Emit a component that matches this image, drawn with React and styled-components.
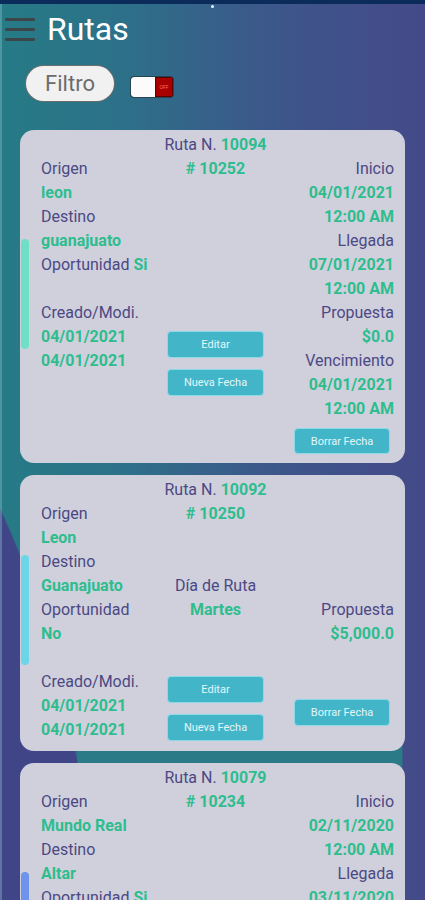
import React from "react";
import styled, { createGlobalStyle } from "styled-components";

const GlobalStyle = createGlobalStyle`
  html, body { margin: 0; padding: 0; background: #3f4586; }
  body { font-family: Roboto, "Liberation Sans", sans-serif; }
  * { box-sizing: border-box; }
`;

const Page = styled.div`
  width: 425px;
  min-height: 1160px;
  overflow: hidden;
  background:
    radial-gradient(399px 749px at -300px 1000px, #3f4586 99.6%, transparent 100%),
    radial-gradient(163px 200px at 240px 757px, #2a7a88 99.4%, transparent 100%),
    linear-gradient(90deg, #267b86 0%, #2d7089 30%, #37608a 50%, #3e548a 70%, #444a89 100%);
  box-shadow: inset 2px 0 0 rgba(150, 205, 210, 0.35);
`;

const TopStrip = styled.div`
  height: 4px;
  background: #0b2c5a;
  display: flex;
  justify-content: center;
  align-items: flex-start;
`;

const StatusDot = styled.span`
  width: 3px;
  height: 3px;
  margin-top: 5px;
  border-radius: 50%;
  background: #e9f2ff;
`;

const TitleBar = styled.header`
  height: 50px;
  display: flex;
  align-items: center;
  padding-left: 5px;
`;

const Hamburger = styled.div`
  width: 30px;
  height: 23px;
  display: flex;
  flex-direction: column;
  justify-content: space-between;
`;

const HamLine = styled.span`
  height: 3px;
  border-radius: 1px;
  background: #3c4547;
`;

const Title = styled.h1`
  margin: 0 0 0 12px;
  font-family: Roboto, sans-serif;
  font-weight: 400;
  font-size: 32px;
  line-height: 1;
  color: #ffffff;
`;

const FilterRow = styled.div`
  margin-top: 12px;
  padding-left: 26px;
  display: flex;
  align-items: flex-start;
  gap: 17px;
`;

const FilterPill = styled.button`
  width: 88px;
  height: 35px;
  border-radius: 18px;
  border: none;
  background: #f1f1f1;
  box-shadow: 0 0 0 1px #6d6d6d;
  color: #6c6c6c;
  font-family: Roboto, sans-serif;
  font-size: 22px;
  padding: 0;
`;

const Switch = styled.div`
  margin-top: 11px;
  width: 42px;
  height: 20px;
  display: flex;
  border-radius: 3px;
  overflow: hidden;
  box-shadow: 0 0 0 1px rgba(35, 35, 35, 0.55);
`;

const SwitchKnob = styled.span`
  width: 24px;
  background: #fbfbfb;
  border-radius: 3px 0 0 3px;
`;

const SwitchOff = styled.span`
  flex: 1;
  background: #a80000;
  border: 1px solid #5c0000;
  color: #ff6d6d;
  font-family: Roboto, sans-serif;
  font-size: 5px;
  display: flex;
  align-items: center;
  justify-content: center;
`;

const CardList = styled.main`
  margin-top: 29px;
  padding: 0 20px;
  display: flex;
  flex-direction: column;
  gap: 12px;
`;

const Card = styled.section`
  display: flex;
  background: #cfd0dc;
  border-radius: 14px;
  padding: 3px 11px 9px 1px;
  font-family: Roboto, sans-serif;
  font-size: 16px;
  line-height: 24px;
`;

const AccentBar = styled.span`
  flex-shrink: 0;
  align-self: center;
  width: 8px;
  height: 110px;
  border-radius: 4px;
  margin-right: 12px;
  background: ${(p) => p.$color};
`;

const CardBody = styled.div`
  flex: 1;
  display: flex;
  flex-direction: column;
`;

const CardTitle = styled.div`
  text-align: center;
  padding-right: 4px;
  color: #4c4884;
  white-space: nowrap;
`;

const Columns = styled.div`
  display: grid;
  grid-template-columns: 126px 97px 1fr;
`;

const Column = styled.div`
  display: flex;
  flex-direction: column;
  align-items: ${(p) => p.$align};
  text-align: ${(p) => (p.$align === "flex-end" ? "right" : p.$align === "center" ? "center" : "left")};
  white-space: nowrap;
`;

const Label = styled.span`
  color: #4c4884;
  font-weight: 400;
`;

const Value = styled.span`
  color: #2ebd8e;
  font-weight: 700;
`;

const Spacer = styled.div`
  height: ${(p) => p.$rows * 24}px;
`;

const ActionButton = styled.button`
  width: ${(p) => p.$w || 97}px;
  height: ${(p) => p.$h || 27}px;
  margin-top: ${(p) => p.$mt || 0}px;
  margin-right: ${(p) => p.$mr || 0}px;
  padding: 0;
  border: 1px solid #8adbe7;
  border-radius: 4px;
  background: #42b5c9;
  color: #e4f6f9;
  font-family: Roboto, sans-serif;
  font-size: 11px;
  line-height: 1;
`;

const L = (text, extra) => ({ t: "label", text, extra });
const V = (text) => ({ t: "value", text });
const G = (n) => ({ t: "gap", n });
const B = (text, opts = {}) => ({ t: "btn", text, ...opts });

const cards = [
  {
    id: "10094",
    accent: "#6fe0c6",
    left: [L("Origen"), V("leon"), L("Destino"), V("guanajuato"), L("Oportunidad", "Si"), G(1), L("Creado/Modi."), V("04/01/2021"), V("04/01/2021")],
    mid: [V("# 10252"), G(6), B("Editar", { mt: 6 }), B("Nueva Fecha", { mt: 11 })],
    right: [
      L("Inicio"), V("04/01/2021"), V("12:00 AM"), L("Llegada"), V("07/01/2021"), V("12:00 AM"),
      L("Propuesta"), V("$0.0"), L("Vencimiento"), V("04/01/2021"), V("12:00 AM"),
      B("Borrar Fecha", { mt: 7, h: 26, w: 96, mr: 4 }),
    ],
  },
  {
    id: "10092",
    accent: "#6cd6e8",
    left: [L("Origen"), V("Leon"), L("Destino"), V("Guanajuato"), L("Oportunidad"), V("No"), G(1), L("Creado/Modi."), V("04/01/2021"), V("04/01/2021")],
    mid: [V("# 10250"), G(2), L("Día de Ruta"), V("Martes"), G(2), B("Editar", { mt: 6 }), B("Nueva Fecha", { mt: 11 })],
    right: [G(4), L("Propuesta"), V("$5,000.0"), B("Borrar Fecha", { mt: 53, h: 27, w: 96, mr: 4 })],
  },
  {
    id: "10079",
    accent: "#6e93ea",
    left: [L("Origen"), V("Mundo Real"), L("Destino"), V("Altar"), L("Oportunidad", "Si"), G(1), L("Creado/Modi."), V("02/11/2020"), V("02/11/2020")],
    mid: [V("# 10234"), G(6), B("Editar", { mt: 6 }), B("Nueva Fecha", { mt: 11 })],
    right: [
      L("Inicio"), V("02/11/2020"), V("12:00 AM"), L("Llegada"), V("03/11/2020"), V("12:00 AM"),
      L("Propuesta"), V("$0.0"), L("Vencimiento"), V("02/11/2020"), V("12:00 AM"),
      B("Borrar Fecha", { mt: 7, h: 26, w: 96, mr: 4 }),
    ],
  },
];

function Item({ item }) {
  if (item.t === "label")
    return (
      <Label>
        {item.text}
        {item.extra ? <Value> {item.extra}</Value> : null}
      </Label>
    );
  if (item.t === "value") return <Value>{item.text}</Value>;
  if (item.t === "gap") return <Spacer $rows={item.n} />;
  return (
    <ActionButton $mt={item.mt} $h={item.h} $w={item.w} $mr={item.mr}>
      {item.text}
    </ActionButton>
  );
}

function RouteCard({ card }) {
  return (
    <Card>
      <AccentBar $color={card.accent} />
      <CardBody>
        <CardTitle>
          Ruta N. <Value>{card.id}</Value>
        </CardTitle>
        <Columns>
          <Column $align="flex-start">
            {card.left.map((it, i) => <Item key={i} item={it} />)}
          </Column>
          <Column $align="center">
            {card.mid.map((it, i) => <Item key={i} item={it} />)}
          </Column>
          <Column $align="flex-end">
            {card.right.map((it, i) => <Item key={i} item={it} />)}
          </Column>
        </Columns>
      </CardBody>
    </Card>
  );
}

export default function App() {
  return (
    <>
      <GlobalStyle />
      <Page>
        <TopStrip>
          <StatusDot />
        </TopStrip>
        <TitleBar>
          <Hamburger>
            <HamLine />
            <HamLine />
            <HamLine />
          </Hamburger>
          <Title>Rutas</Title>
        </TitleBar>
        <FilterRow>
          <FilterPill>Filtro</FilterPill>
          <Switch>
            <SwitchKnob />
            <SwitchOff>OFF</SwitchOff>
          </Switch>
        </FilterRow>
        <CardList>
          {cards.map((c) => (
            <RouteCard key={c.id} card={c} />
          ))}
        </CardList>
      </Page>
    </>
  );
}
